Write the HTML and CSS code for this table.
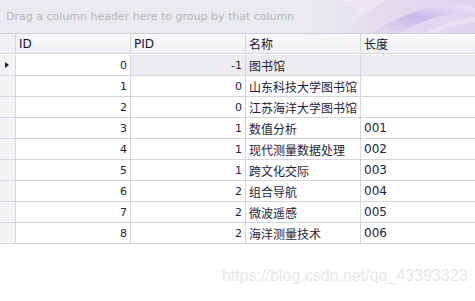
FILE: index.html
```html
<!DOCTYPE html>
<html>
<head>
<meta charset="utf-8">
<link rel="stylesheet" href="styles.css">
</head>
<body>
<div class="grid">
  <div class="group-panel">
    <svg class="swirl" width="200" height="33" viewBox="0 0 200 33">
      <defs>
        <linearGradient id="g1" x1="0" y1="0" x2="1" y2="0">
          <stop offset="0" stop-color="#ebebef" stop-opacity="0"/>
          <stop offset="0.5" stop-color="#e4dcef"/>
          <stop offset="1" stop-color="#ddd3ee"/>
        </linearGradient>
        <linearGradient id="g2" x1="0" y1="1" x2="1" y2="0">
          <stop offset="0" stop-color="#d8cdf0" stop-opacity="0.2"/>
          <stop offset="0.5" stop-color="#c8b8ec"/>
          <stop offset="1" stop-color="#ece8f4"/>
        </linearGradient>
      </defs>
      <rect x="0" y="0" width="200" height="33" fill="url(#g1)"/>
      <path d="M95 33 C120 20 140 8 175 5 C185 4 195 6 200 8 L200 14 C180 10 150 18 125 33 Z" fill="url(#g2)"/>
      <path d="M150 33 C165 24 185 18 200 17 L200 22 C185 24 170 28 162 33 Z" fill="#e7e1f2"/>
      <path d="M60 0 L110 0 C100 8 90 14 70 22 C85 12 90 6 60 0 Z" fill="#efe8f4" opacity="0.8"/>
    </svg>
    <span class="group-text">Drag a column header here to group by that column</span>
  </div>
  <div class="row header">
    <div class="cell ind"></div>
    <div class="cell c">ID</div>
    <div class="cell c">PID</div>
    <div class="cell c">名称</div>
    <div class="cell c last">长度</div>
  </div>
  <div class="row focused">
    <div class="cell ind"><span class="arrow"></span></div>
    <div class="cell c num focus">0</div>
    <div class="cell c num">-1</div>
    <div class="cell c">图书馆</div>
    <div class="cell c last"></div>
  </div>
  <div class="row">
    <div class="cell ind"></div>
    <div class="cell c num">1</div>
    <div class="cell c num">0</div>
    <div class="cell c">山东科技大学图书馆</div>
    <div class="cell c last"></div>
  </div>
  <div class="row">
    <div class="cell ind"></div>
    <div class="cell c num">2</div>
    <div class="cell c num">0</div>
    <div class="cell c">江苏海洋大学图书馆</div>
    <div class="cell c last"></div>
  </div>
  <div class="row">
    <div class="cell ind"></div>
    <div class="cell c num">3</div>
    <div class="cell c num">1</div>
    <div class="cell c">数值分析</div>
    <div class="cell c last">001</div>
  </div>
  <div class="row">
    <div class="cell ind"></div>
    <div class="cell c num">4</div>
    <div class="cell c num">1</div>
    <div class="cell c">现代测量数据处理</div>
    <div class="cell c last">002</div>
  </div>
  <div class="row">
    <div class="cell ind"></div>
    <div class="cell c num">5</div>
    <div class="cell c num">1</div>
    <div class="cell c">跨文化交际</div>
    <div class="cell c last">003</div>
  </div>
  <div class="row">
    <div class="cell ind"></div>
    <div class="cell c num">6</div>
    <div class="cell c num">2</div>
    <div class="cell c">组合导航</div>
    <div class="cell c last">004</div>
  </div>
  <div class="row">
    <div class="cell ind"></div>
    <div class="cell c num">7</div>
    <div class="cell c num">2</div>
    <div class="cell c">微波遥感</div>
    <div class="cell c last">005</div>
  </div>
  <div class="row">
    <div class="cell ind"></div>
    <div class="cell c num">8</div>
    <div class="cell c num">2</div>
    <div class="cell c">海洋测量技术</div>
    <div class="cell c last">006</div>
  </div>
  <div class="empty">
    <span class="watermark">https://blog.csdn.net/qq_43393323</span>
  </div>
</div>
</body>
</html>
```

FILE: styles.css
```css
html, body {
  margin: 0;
  padding: 0;
  background: #ffffff;
}
.grid {
  width: 475px;
  height: 301px;
  overflow: hidden;
  font-family: "DejaVu Sans", "Noto Sans CJK SC", sans-serif;
  font-size: 11px;
  color: #1e1e3c;
  display: flex;
  flex-direction: column;
}
.group-panel {
  position: relative;
  height: 33px;
  background: #ebebef;
  display: flex;
  align-items: center;
  padding-left: 6px;
  flex-shrink: 0;
}
.swirl {
  position: absolute;
  right: 0;
  top: 0;
}
.group-text {
  position: relative;
  color: #b4b4bc;
  font-size: 11px;
}
.row {
  display: flex;
  height: 21px;
  flex-shrink: 0;
}
.cell {
  box-sizing: border-box;
  height: 21px;
  border-bottom: 1px solid #d6d6de;
  border-right: 1px solid #d6d6de;
  display: flex;
  align-items: center;
  padding: 0 3px;
  white-space: nowrap;
  overflow: hidden;
}
.ind {
  width: 16px;
  background: #f4f4f6;
  padding: 0;
  justify-content: center;
}
.c {
  width: 115px;
  font-family: "DejaVu Sans", "Noto Sans CJK SC", sans-serif;
  font-size: 12px;
}
.c.num {
  justify-content: flex-end;
  font-size: 11px;
}
.last {
  width: 114px;
  border-right: none;
}
.header {
  border-top: 1px solid #d0d0d8;
  height: 21px;
}
.header .cell {
  background: linear-gradient(#fafafc, #f0f0f4);
  height: 20px;
  color: #141432;
}
.header .ind {
  background: #f0f0f4;
}
.focused .c {
  background: #ececf0;
}
.focused .c.focus {
  background: #ffffff;
}
.arrow {
  width: 0;
  height: 0;
  border-top: 3.5px solid transparent;
  border-bottom: 3.5px solid transparent;
  border-left: 4px solid #202030;
  margin-left: -2px;
}
.empty {
  flex: 1;
  position: relative;
}
.watermark {
  position: absolute;
  left: 222px;
  top: 23px;
  font-family: "Liberation Sans", Arial, sans-serif;
  font-size: 16px;
  color: #e8e8e8;
}
```
